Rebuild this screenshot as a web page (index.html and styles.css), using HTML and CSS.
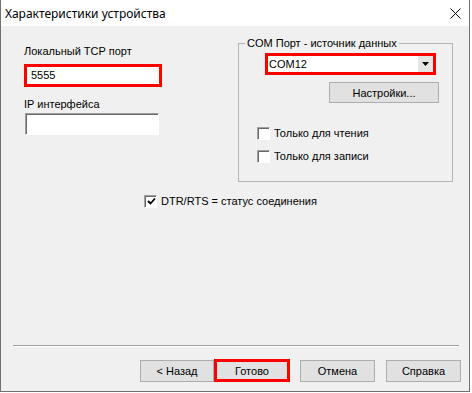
FILE: index.html
```html
<!DOCTYPE html>
<html lang="ru">
<head>
    <meta charset="UTF-8">
    <meta name="viewport" content="width=device-width, initial-scale=1.0">
    <title>Характеристики устройства</title>
    <link rel="stylesheet" href="styles.css">
</head>
<body>
    <div class="window">
        <div class="titlebar">
            <span class="title">Характеристики устройства</span>
            <svg class="close" width="11" height="11" viewBox="0 0 11 11">
                <path d="M0.5 0.5 L10.5 10.5 M10.5 0.5 L0.5 10.5" stroke="#000" stroke-width="1" fill="none"/>
            </svg>
        </div>
        <div class="client">
            <div class="content">
                <div class="top">
                    <div class="left-col">
                        <div class="label">Локальный TCP порт</div>
                        <div class="field field-marked">5555</div>
                        <div class="label label-ip">IP интерфейса</div>
                        <div class="field field-plain"></div>
                    </div>
                    <fieldset class="group">
                        <legend>COM Порт - источник данных</legend>
                        <div class="combo">
                            <span class="combo-value">COM12</span>
                            <span class="combo-btn">
                                <svg width="7" height="4" viewBox="0 0 7 4"><path d="M0 0 H7 L3.5 4 Z" fill="#000"/></svg>
                            </span>
                        </div>
                        <button class="btn btn-settings">Настройки...</button>
                        <label class="check check-first"><span class="box"></span>Только для чтения</label>
                        <label class="check check-second"><span class="box"></span>Только для записи</label>
                    </fieldset>
                </div>
                <label class="check check-dtr">
                    <span class="box">
                        <svg width="9" height="9" viewBox="0 0 9 9"><path d="M1 4 L3.5 6.5 L8 1.5" stroke="#000" stroke-width="1.8" fill="none"/></svg>
                    </span>DTR/RTS = статус соединения
                </label>
            </div>
            <div class="footer">
                <div class="separator"></div>
                <div class="buttons">
                    <button class="btn btn-back">&lt; Назад</button>
                    <button class="btn btn-finish">Готово</button>
                    <button class="btn btn-cancel">Отмена</button>
                    <button class="btn btn-help">Справка</button>
                </div>
            </div>
        </div>
    </div>
</body>
</html>
```

FILE: styles.css
```css
body {
    margin: 0;
    background-color: #ffffff;
    font-family: "Liberation Sans", Arial, sans-serif;
    font-size: 11px;
    color: #000;
}
.window {
    width: 470px;
    box-sizing: border-box;
    border: 1px solid #707070;
    border-top: none;
}
.titlebar {
    height: 26px;
    display: flex;
    align-items: center;
    justify-content: space-between;
    padding: 0 8px 0 4px;
    background-color: #fff;
}
.title {
    font-family: "Noto Sans", sans-serif;
    font-size: 12px;
}
.close {
    display: block;
}
.client {
    height: 365px;
    background-color: #f0f0f0;
    display: flex;
    flex-direction: column;
}
.content {
    flex: 1;
}
.top {
    display: flex;
    align-items: flex-start;
}
.left-col {
    width: 214px;
    margin-left: 23px;
    margin-top: 18px;
}
.label {
    line-height: 14px;
    height: 14px;
}
.field {
    background-color: #fff;
    box-sizing: border-box;
    line-height: 17px;
}
.field-marked {
    margin-top: 6px;
    width: 138px;
    height: 23px;
    border: 3px solid #ff0000;
    padding-left: 4px;
}
.label-ip {
    margin-top: 10px;
}
.field-plain {
    margin-top: 2px;
    margin-left: 1px;
    width: 134px;
    height: 22px;
    border: 1px solid;
    border-color: #a0a0a0 #fff #fff #a0a0a0;
    box-shadow: inset 1px 1px #696969;
}
.group {
    margin: 10px 0 0 0;
    padding: 0 0 18px 0;
    width: 215px;
    box-sizing: border-box;
    min-width: 0;
    border: 1px solid #b4b4b4;
}
.group legend {
    margin-left: 6px;
    padding: 0 2px;
    line-height: 14px;
}
.combo {
    display: flex;
    margin: 3px 0 0 26px;
    width: 171px;
    height: 22px;
    box-sizing: border-box;
    border: 3px solid #ff0000;
    background-color: #fff;
}
.combo-value {
    flex: 1;
    line-height: 16px;
    padding-left: 1px;
}
.combo-btn {
    width: 15px;
    background-color: #e5e5e5;
    display: flex;
    align-items: center;
    justify-content: center;
}
.combo-btn svg {
    display: block;
}
.btn {
    display: block;
    box-sizing: border-box;
    height: 22px;
    padding: 0;
    font-family: inherit;
    font-size: 11px;
    color: #000;
    background-color: #e1e1e1;
    border: 1px solid #adadad;
    text-align: center;
}
.btn-settings {
    margin: 7px 0 0 90px;
    width: 110px;
    height: 21px;
}
.check {
    display: flex;
    align-items: center;
    height: 14px;
    line-height: 14px;
}
.box {
    width: 13px;
    height: 13px;
    box-sizing: border-box;
    margin-right: 4px;
    background-color: #fff;
    border: 1px solid;
    border-color: #a0a0a0 #fff #fff #a0a0a0;
    box-shadow: inset 1px 1px #696969;
    display: flex;
    align-items: center;
    justify-content: center;
}
.box svg {
    display: block;
    margin: 1px 0 0 1px;
}
.check-first {
    margin: 23px 0 0 18px;
}
.check-second {
    margin: 9px 0 0 18px;
}
.check-dtr {
    margin: 12px 0 0 143px;
}
.footer {
    padding-bottom: 9px;
}
.separator {
    margin: 0 10px 0 12px;
    border-top: 1px solid #a0a0a0;
    border-bottom: 1px solid #fff;
}
.buttons {
    display: flex;
    justify-content: flex-end;
    align-items: flex-end;
    margin-top: 13px;
    padding-right: 8px;
    height: 22px;
}
.btn-back {
    width: 74px;
}
.btn-finish {
    width: 76px;
    height: 23px;
    border: 3px solid #ff0000;
    margin-right: 10px;
}
.btn-cancel {
    width: 75px;
    margin-right: 11px;
}
.btn-help {
    width: 75px;
}
```
